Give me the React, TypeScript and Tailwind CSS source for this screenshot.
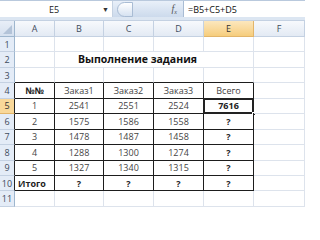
import React from 'react'

const cols = ['A', 'B', 'C', 'D', 'E', 'F']

const table: Record<number, string[]> = {
  4: ['№№', 'Заказ1', 'Заказ2', 'Заказ3', 'Всего'],
  5: ['1', '2541', '2551', '2524', '7616'],
  6: ['2', '1575', '1586', '1558', '?'],
  7: ['3', '1478', '1487', '1458', '?'],
  8: ['4', '1288', '1300', '1274', '?'],
  9: ['5', '1327', '1340', '1315', '?'],
  10: ['Итого', '?', '?', '?', '?'],
}

const gridCols = 'grid grid-cols-[15px_40px_49px_50px_50px_50px_51px]'

function FormulaBar() {
  return (
    <div className="flex h-[17px] border-t border-[#b9c9dd] bg-[#dfe8f4]">
      <div className="flex w-[113px] items-center bg-white border-r border-[#c5d2e2]">
        <span className="flex-1 pl-[6px] text-center text-[9px] text-[#222]">E5</span>
        <span className="w-[10px] text-[7px] text-[#333]">▼</span>
      </div>
      <div className="flex w-[70px] items-center bg-gradient-to-b from-[#e9f0f9] to-[#ccdaec]">
        <div className="ml-[4px] h-[15px] w-[16px] rounded-l-full border border-[#a9bcd4] bg-gradient-to-b from-[#ffffff] to-[#d6e2f1]" />
        <span className="ml-auto mr-[6px] font-['Liberation_Serif',serif] text-[10px] italic text-[#555]">
          f<sub className="text-[6px]">x</sub>
        </span>
      </div>
      <div className="flex flex-1 items-center border-l border-[#a9bcd4] bg-white pl-[4px] text-[9px] text-[#111]">
        =B5+C5+D5
      </div>
    </div>
  )
}

function HeaderRow() {
  return (
    <div className={`${gridCols} h-[16px]`}>
      <div className="relative border-r border-b border-[#9eb6ce] bg-gradient-to-b from-[#e8eef7] to-[#d5e0ef]">
        <svg className="absolute bottom-[2px] right-[2px]" width="9" height="9" viewBox="0 0 9 9">
          <polygon points="9,0 9,9 0,9" fill="#b3c3d8" />
        </svg>
      </div>
      {cols.map((c) => (
        <div
          key={c}
          className={`flex items-center justify-center border-r border-b text-[9px] ${
            c === 'E'
              ? 'border-[#e2b56a] bg-gradient-to-b from-[#fce7bd] to-[#f6cd7c] text-[#333]'
              : 'border-[#c4d1e2] bg-gradient-to-b from-[#f7f9fc] to-[#e3eaf4] text-[#3e4b5c]'
          }`}
        >
          {c}
        </div>
      ))}
    </div>
  )
}

function Row({ r }: { r: number }) {
  const inTable = r >= 4 && r <= 10
  const data = table[r]
  const rowHead = `flex items-center justify-center border-b text-[9px] ${
    r === 5
      ? 'bg-[#f9d899] border-[#e2b56a] text-[#333]'
      : 'bg-[#e4ecf7] border-[#c4d1e2] text-[#3e4b5c]'
  } ${inTable ? 'border-r border-r-[#222]' : 'border-r border-r-[#9eb6ce]'}`

  if (r === 2) {
    return (
      <div className={`${gridCols} h-[15.45px]`}>
        <div className={rowHead}>{r}</div>
        <div className="border-r border-b border-[#dde3ec]" />
        <div className="col-span-4 flex items-center border-r border-b border-[#dde3ec] pl-[23px] text-[10.5px] font-bold text-[#111]">
          Выполнение задания
        </div>
        <div className="border-r border-b border-[#dde3ec]" />
      </div>
    )
  }

  return (
    <div className={`${gridCols} h-[15.45px]`}>
      <div className={rowHead}>{r}</div>
      {cols.map((c, i) => {
        const tableCell = inTable && i < 5
        const aboveTable = r === 3 && i < 5
        const text = tableCell ? data[i] : ''
        const bold = r === 10 || (r === 4 && i === 0) || (r === 5 && i === 4) || text === '?'
        const left = r === 10 && i === 0
        return (
          <div
            key={c}
            className={`relative flex items-center border-r border-b text-[9px] ${
              tableCell ? 'border-[#1d1d1d]' : 'border-[#dde3ec]'
            } ${aboveTable ? 'border-b-[#1d1d1d]' : ''} ${left ? 'justify-start pl-[3px]' : 'justify-center'} ${
              bold ? 'font-bold text-[#222]' : 'text-[#444]'
            }`}
          >
            {text}
            {r === 5 && i === 4 && (
              <>
                <div className="pointer-events-none absolute -left-[1px] -top-[1px] -right-[1px] -bottom-[1px] border-2 border-[#222]" />
                <div className="absolute -bottom-[3px] -right-[3px] h-[4px] w-[4px] border border-white bg-[#222]" />
              </>
            )}
          </div>
        )
      })}
    </div>
  )
}

export default function App() {
  const rows = Array.from({ length: 11 }, (_, i) => i + 1)
  return (
    <div className="h-[210px] w-[305px] overflow-hidden bg-white font-['Open_Sans',sans-serif] leading-none">
      <FormulaBar />
      <div className="h-[4px] bg-[#dce6f2] border-b border-[#c4d1e2]" />
      <HeaderRow />
      {rows.map((r) => (
        <Row key={r} r={r} />
      ))}
    </div>
  )
}
